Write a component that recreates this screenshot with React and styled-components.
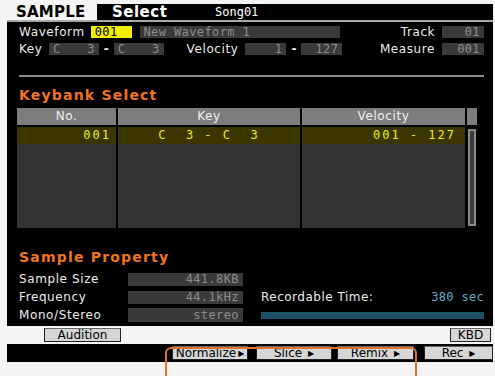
import React from "react";
import styled, { createGlobalStyle } from "styled-components";

const Global = createGlobalStyle`
  html, body {
    margin: 0;
    padding: 0;
    background: #f4f4f4;
  }
  body {
    font-family: "DejaVu Sans", "Liberation Sans", sans-serif;
  }
`;

const Page = styled.div`
  position: relative;
  width: 495px;
  height: 376px;
  overflow: hidden;
  padding: 4px 2px 0 7px;
  box-sizing: border-box;
`;

const Screen = styled.div`
  background: #000;
  width: 486px;
  display: flex;
  flex-direction: column;
`;

const TitleBar = styled.div`
  display: flex;
  align-items: center;
  height: 16px;
  border-bottom: 2px solid #a8a8a8;
`;

const ModeTab = styled.div`
  background: #f4f4f4;
  color: #000;
  font-weight: bold;
  font-size: 15px;
  width: 90px;
  height: 16px;
  line-height: 16px;
  padding-left: 9px;
  box-sizing: border-box;
  letter-spacing: 0.2px;
`;

const Title = styled.div`
  color: #fff;
  font-weight: bold;
  font-size: 15px;
  margin-left: 15px;
  width: 103px;
  letter-spacing: 0.5px;
`;

const SongName = styled.div`
  color: #fff;
  font-family: "DejaVu Sans Mono", monospace;
  font-size: 12px;
`;

const Body = styled.div`
  padding: 4px 9px 0 12px;
  display: flex;
  flex-direction: column;
`;

const Row = styled.div`
  display: flex;
  align-items: center;
  height: 12px;
  margin-bottom: ${(p) => p.$gap || 0}px;
`;

const Label = styled.span`
  color: #ececec;
  font-size: 12px;
  letter-spacing: 0.6px;
  width: ${(p) => (p.$w ? p.$w + "px" : "auto")};
  text-align: ${(p) => p.$align || "left"};
  margin-left: ${(p) => p.$ml || 0}px;
  white-space: nowrap;
`;

const Field = styled.div`
  background: ${(p) => (p.$hot ? "#f2ee00" : "#3a3a3a")};
  color: ${(p) => (p.$hot ? "#000" : "#8c8c8c")};
  font-family: "DejaVu Sans Mono", monospace;
  font-size: 12px;
  letter-spacing: 0.4px;
  height: ${(p) => p.$h || 12}px;
  line-height: ${(p) => p.$h || 12}px;
  width: ${(p) => p.$w}px;
  margin-left: ${(p) => p.$ml || 0}px;
  padding: 0 4px;
  box-sizing: border-box;
  display: flex;
  justify-content: ${(p) => p.$justify || "flex-end"};
  white-space: pre;
`;

const Dash = styled.span`
  color: #ececec;
  font-size: 12px;
  width: 15px;
  text-align: center;
  font-weight: bold;
`;

const Divider = styled.div`
  height: 2px;
  background: #8a8a8a;
  margin: 20px 0 0 0;
  width: 465px;
`;

const Section = styled.div`
  color: #f0741e;
  font-weight: bold;
  font-size: 14px;
  letter-spacing: 1.2px;
  height: 14px;
  line-height: 14px;
  margin-top: ${(p) => p.$mt}px;
`;

const Table = styled.div`
  margin: 6px 0 0 -2px;
  display: grid;
  grid-template-columns: 99px 182px 163px 10px;
  column-gap: 2px;
  grid-template-rows: 17px 101px;
  row-gap: 2px;
  width: 460px;
`;

const HeadCell = styled.div`
  background: #7d7d7d;
  color: #f0f0f0;
  font-size: 12px;
  letter-spacing: 0.6px;
  text-align: center;
  line-height: 17px;
`;

const Column = styled.div`
  background: #333;
  display: flex;
  flex-direction: column;
`;

const SelCell = styled.div`
  background: #3b3600;
  color: #eded1a;
  font-family: "DejaVu Sans Mono", monospace;
  font-size: 12px;
  letter-spacing: 2px;
  height: 17px;
  line-height: 17px;
  text-align: ${(p) => p.$align || "right"};
  padding: ${(p) => p.$pad || "0 12px 0 0"};
  white-space: pre;
`;

const ScrollTrack = styled.div`
  background: #000;
  padding: 2px 1px 2px 1px;
  display: flex;
`;

const Thumb = styled.div`
  flex: 1;
  border: 2px solid #8a8a8a;
  background: #3a3a3a;
`;

const PropGrid = styled.div`
  margin-top: 6px;
  display: grid;
  grid-template-columns: 109px 115px 18px 1fr;
  grid-auto-rows: 18px;
  align-items: center;
`;

const Rec = styled.div`
  display: flex;
  justify-content: space-between;
  color: #ececec;
  font-size: 12px;
  letter-spacing: 0.5px;
`;

const RecValue = styled.span`
  color: #5fb0c4;
  font-family: "DejaVu Sans Mono", monospace;
  letter-spacing: 0.3px;
`;

const Meter = styled.div`
  height: 7px;
  background: #1c5068;
`;

const WhiteBar = styled.div`
  margin-top: 2px;
  background: #f4f4f4;
  height: 18px;
  display: flex;
  align-items: center;
  justify-content: space-between;
  padding: 0 2px 0 37px;
`;

const KeyButton = styled.div`
  background: #d6d6d6;
  border: 1px solid #222;
  border-top-color: #666;
  color: #000;
  font-size: 12px;
  height: 14px;
  line-height: 13px;
  width: ${(p) => p.$w}px;
  text-align: center;
  box-sizing: border-box;
  margin-left: ${(p) => p.$ml || 0}px;
  white-space: nowrap;
`;

const FuncBar = styled.div`
  background: #000;
  height: 18px;
  display: flex;
  align-items: center;
  padding-left: 165px;
`;

const Arrow = styled.span`
  font-size: 8px;
  margin-left: 2px;
  vertical-align: 1px;
`;

const Highlight = styled.div`
  position: absolute;
  left: 165px;
  top: 347px;
  width: 252px;
  height: 40px;
  border: 2px solid #e2712c;
  border-radius: 6px;
  box-sizing: border-box;
`;

export default function App() {
  return (
    <>
      <Global />
      <Page>
        <Screen>
          <TitleBar>
            <ModeTab>SAMPLE</ModeTab>
            <Title>Select</Title>
            <SongName>Song01</SongName>
          </TitleBar>
          <Body>
            <Row $gap={5}>
              <Label $w={72}>Waveform</Label>
              <Field $hot $w={41} $justify="flex-start">001</Field>
              <Field $w={201} $ml={8} $justify="flex-start">New Waveform 1</Field>
              <Label $w={96} $align="right">Track</Label>
              <Field $w={42} $ml={7}>01</Field>
            </Row>
            <Row>
              <Label $w={30}>Key</Label>
              <Field $w={50} $justify="space-between"><span>C</span><span>3</span></Field>
              <Dash>-</Dash>
              <Field $w={50} $justify="space-between"><span>C</span><span>3</span></Field>
              <Label $w={75} $align="right">Velocity</Label>
              <Field $w={41} $ml={7}>1</Field>
              <Dash>-</Dash>
              <Field $w={41}>127</Field>
              <Label $w={93} $align="right">Measure</Label>
              <Field $w={42} $ml={7}>001</Field>
            </Row>
            <Divider />
            <Section $mt={11}>Keybank Select</Section>
            <Table>
              <HeadCell>No.</HeadCell>
              <HeadCell>Key</HeadCell>
              <HeadCell>Velocity</HeadCell>
              <HeadCell />
              <Column>
                <SelCell $pad="0 5px 0 0">001</SelCell>
              </Column>
              <Column>
                <SelCell $align="center" $pad="0">{"C  3 - C  3"}</SelCell>
              </Column>
              <Column>
                <SelCell $pad="0 9px 0 0">{"001 - 127"}</SelCell>
              </Column>
              <ScrollTrack>
                <Thumb />
              </ScrollTrack>
            </Table>
            <Section $mt={22}>Sample Property</Section>
            <PropGrid>
              <Label>Sample Size</Label>
              <Field $w={115} $h={13}>441.8KB</Field>
              <span />
              <span />
              <Label>Frequency</Label>
              <Field $w={115} $h={13}>44.1kHz</Field>
              <span />
              <Rec>
                <span>Recordable Time:</span>
                <RecValue>380 sec</RecValue>
              </Rec>
              <Label>Mono/Stereo</Label>
              <Field $w={115} $h={14}>stereo</Field>
              <span />
              <Meter />
            </PropGrid>
          </Body>
          <WhiteBar>
            <KeyButton $w={77}>Audition</KeyButton>
            <KeyButton $w={41}>KBD</KeyButton>
          </WhiteBar>
          <FuncBar>
            <KeyButton $w={76}>Normalize<Arrow>▶</Arrow></KeyButton>
            <KeyButton $w={76} $ml={8}>Slice <Arrow>▶</Arrow></KeyButton>
            <KeyButton $w={77} $ml={5}>Remix <Arrow>▶</Arrow></KeyButton>
            <KeyButton $w={69} $ml={10}>Rec <Arrow>▶</Arrow></KeyButton>
          </FuncBar>
        </Screen>
        <Highlight />
      </Page>
    </>
  );
}
